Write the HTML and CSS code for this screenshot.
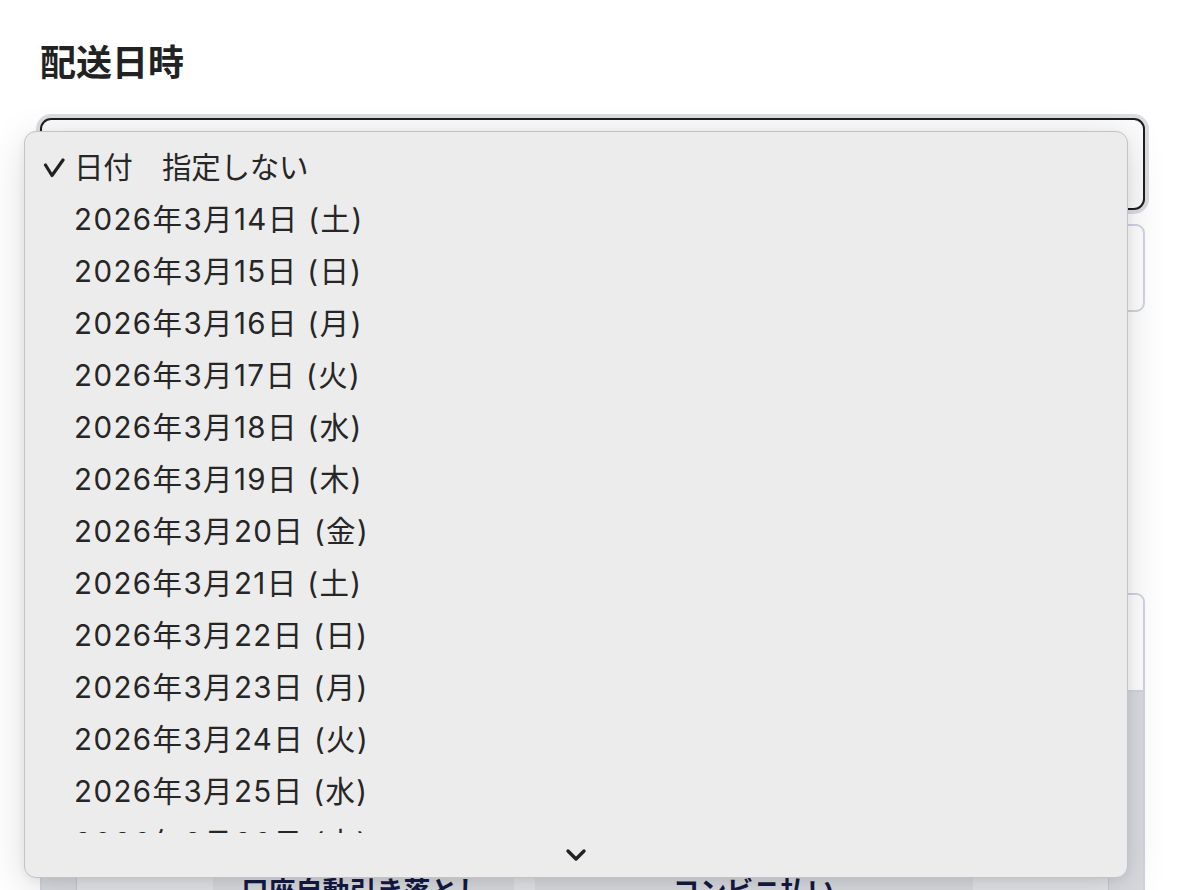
FILE: index.html
```html
<!DOCTYPE html>
<html lang="ja">
<head>
<meta charset="utf-8">
<title>配送日時</title>
<link rel="stylesheet" href="styles.css">
</head>
<body>
<main class="page">
  <h2 class="section-title">配送日時</h2>
  <div class="select-wrap">
    <div class="select-box"></div>
    <div class="menu">
      <ul class="menu-list">
        <li class="menu-item is-selected">
          <svg class="check" width="22" height="20" viewBox="0 0 22 20"><path d="M2.5 7 L9 17.5 L20 2" fill="none" stroke="#222" stroke-width="3.2" stroke-linecap="round" stroke-linejoin="round"/></svg>
          日付　指定しない
        </li>
        <li class="menu-item">2026年3月14日 (土)</li>
        <li class="menu-item">2026年3月15日 (日)</li>
        <li class="menu-item">2026年3月16日 (月)</li>
        <li class="menu-item">2026年3月17日 (火)</li>
        <li class="menu-item">2026年3月18日 (水)</li>
        <li class="menu-item">2026年3月19日 (木)</li>
        <li class="menu-item">2026年3月20日 (金)</li>
        <li class="menu-item">2026年3月21日 (土)</li>
        <li class="menu-item">2026年3月22日 (日)</li>
        <li class="menu-item">2026年3月23日 (月)</li>
        <li class="menu-item">2026年3月24日 (火)</li>
        <li class="menu-item">2026年3月25日 (水)</li>
        <li class="menu-item">2026年3月26日 (木)</li>
        <li class="menu-item">2026年3月27日 (金)</li>
      </ul>
      <div class="menu-scroll">
        <svg width="22" height="14" viewBox="0 0 22 14"><path d="M3 3 L11 11 L19 3" fill="none" stroke="#222" stroke-width="3.4" stroke-linecap="round" stroke-linejoin="round"/></svg>
      </div>
    </div>
  </div>
  <div class="time-box"></div>
  <div class="pay-box">
    <div class="pay-head"></div>
    <div class="pay-body">
      <div class="pay-panel">
        <button class="pay-btn pay-btn-bank">口座自動引き落とし</button>
        <button class="pay-btn pay-btn-conv">コンビニ払い</button>
      </div>
    </div>
  </div>
</main>
</body>
</html>
```

FILE: styles.css
```css
* {
  box-sizing: border-box;
}

html, body {
  margin: 0;
  padding: 0;
  background: #ffffff;
  overflow: hidden;
}

body {
  font-family: "Noto Sans CJK JP", "Noto Sans", sans-serif;
  color: #222222;
}

.page {
  padding: 35px 47px 0 40px;
}

.section-title {
  margin: 0 0 33px;
  font-size: 36px;
  line-height: 50px;
  font-weight: 700;
  color: #222222;
}

.select-wrap {
  position: relative;
}

.select-box {
  height: 92px;
  border: 2px solid #1e1e1e;
  border-radius: 11px;
  background: #fbfbfb;
  box-shadow: 0 0 0 4px #dcdde0;
}

.menu {
  position: absolute;
  left: -16px;
  top: 13px;
  width: 1104px;
  height: 747px;
  display: flex;
  flex-direction: column;
  background: #ececec;
  border: 1px solid #c3c3c3;
  border-radius: 12px;
  box-shadow: 0 10px 40px rgba(0, 0, 0, 0.14), 0 2px 8px rgba(0, 0, 0, 0.06);
  z-index: 10;
  overflow: hidden;
}

.menu-list {
  flex: 1;
  margin: 0;
  padding: 9px 0 0;
  list-style: none;
  overflow: hidden;
}

.menu-item {
  position: relative;
  height: 52px;
  line-height: 52px;
  padding-left: 49px;
  font-family: "Inter", "Noto Sans CJK JP", sans-serif;
  font-size: 29.5px;
  letter-spacing: 1.4px;
  color: #262626;
  white-space: nowrap;
}

.menu-item.is-selected {
  letter-spacing: -0.2px;
}

.check {
  position: absolute;
  left: 18px;
  top: 17px;
}

.menu-scroll {
  height: 44px;
  display: flex;
  align-items: center;
  justify-content: center;
}

.time-box {
  margin-top: 14px;
  height: 88px;
  border: 2px solid #d0d5e0;
  border-radius: 9px;
  background: #ffffff;
}

.pay-box {
  margin-top: 281px;
  border: 2px solid #cfd4df;
  border-radius: 9px;
  overflow: hidden;
}

.pay-head {
  height: 97px;
  background: #ffffff;
  border-bottom: 2px solid #cfd4df;
}

.pay-body {
  background: #dadbe0;
  padding: 30px 34px 40px;
}

.pay-panel {
  display: flex;
  justify-content: center;
  gap: 21px;
  padding: 60px 0 30px;
  background: #e6e7ea;
  border: 1px solid #c8cad0;
  border-radius: 4px;
}

.pay-btn {
  padding: 87px 0 20px;
  border: none;
  border-radius: 6px;
  background: #dcdde1;
  font-family: "Noto Sans CJK JP", sans-serif;
  font-size: 27px;
  line-height: 40px;
  font-weight: 700;
  color: #141a45;
}

.pay-btn-bank {
  width: 301px;
}

.pay-btn-conv {
  width: 438px;
}
```
